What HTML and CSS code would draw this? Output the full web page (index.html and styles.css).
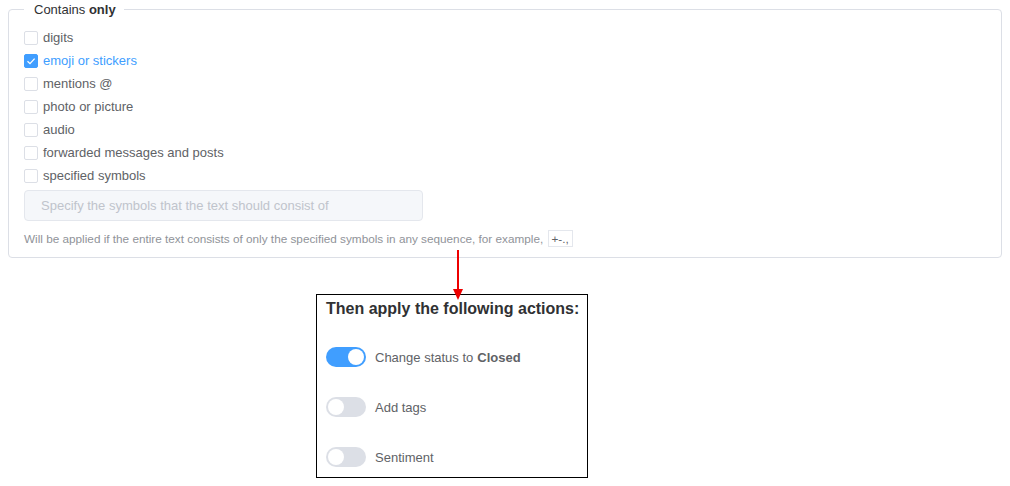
FILE: index.html
```html
<!DOCTYPE html>
<html lang="en">
<head>
  <meta charset="UTF-8" />
  <meta name="viewport" content="width=device-width, initial-scale=1.0"/>
  <title>Contains only</title>
  <link rel="stylesheet" href="styles.css">
</head>
<body>
  <fieldset class="filter">
    <legend>Contains <b>only</b></legend>

    <ul class="checks">
      <li><span class="box"></span>digits</li>
      <li class="checked"><span class="box"><svg viewBox="0 0 14 14" width="14" height="14"><path d="M3.5 7.2 L6 9.6 L10.6 4.6" fill="none" stroke="#fff" stroke-width="1.3"/></svg></span>emoji or stickers</li>
      <li><span class="box"></span>mentions @</li>
      <li><span class="box"></span>photo or picture</li>
      <li><span class="box"></span>audio</li>
      <li><span class="box"></span>forwarded messages and posts</li>
      <li><span class="box"></span>specified symbols</li>
    </ul>

    <div class="symbols">Specify the symbols that the text should consist of</div>
    <p class="hint">Will be applied if the entire text consists of only the specified symbols in any sequence, for example, <code>+-.,</code></p>
  </fieldset>

  <div class="arrow"></div>

  <div class="actions">
    <h3>Then apply the following actions:</h3>
    <div class="action"><span class="switch on"></span>Change status to <b>Closed</b></div>
    <div class="action"><span class="switch"></span>Add tags</div>
    <div class="action"><span class="switch"></span>Sentiment</div>
  </div>
</body>
</html>
```

FILE: styles.css
```css
body {
  margin: 0;
  background: #fff;
  font-family: "Liberation Sans", Arial, sans-serif;
  font-size: 13px;
  color: #606266;
  position: relative;
}
.filter {
  margin: 2px 8px 0;
  padding: 9px 15px 11px;
  border: 1px solid #dcdfe6;
  border-radius: 4px;
  height: 256px;
  box-sizing: border-box;
}
.filter legend {
  margin-left: 0;
  padding: 0 8px 0 10px;
  color: #303133;
  font-size: 13px;
}
.checks {
  list-style: none;
  margin: 0;
  padding: 0;
}
.checks li {
  display: flex;
  align-items: center;
  height: 23px;
}
.box {
  width: 14px;
  height: 14px;
  box-sizing: border-box;
  border: 1px solid #dcdfe6;
  border-radius: 2px;
  margin-right: 5px;
  background: #fff;
}
.box svg {
  display: block;
  margin: -1px;
}
.checks .checked {
  color: #409eff;
}
.checked .box {
  background: #409eff;
  border-color: #409eff;
}
.symbols {
  margin-top: 3px;
  width: 399px;
  height: 31px;
  box-sizing: border-box;
  padding: 0 16px;
  line-height: 29px;
  background: #f5f7fa;
  border: 1px solid #e4e7ed;
  border-radius: 4px;
  color: #c0c4cc;
}
.hint {
  margin: 9px 0 0;
  font-size: 11.75px;
  color: #909399;
}
.hint code {
  display: inline-block;
  font-family: inherit;
  border: 1px solid #e4e7ed;
  padding: 1px 3px;
  margin-left: 1px;
  color: #606266;
}
.arrow {
  position: absolute;
  left: 457px;
  top: 250px;
  width: 2px;
  height: 40px;
  background: #e00;
}
.arrow::after {
  content: "";
  position: absolute;
  left: -4px;
  bottom: -10px;
  border-left: 5px solid transparent;
  border-right: 5px solid transparent;
  border-top: 11px solid #e00;
}
.actions {
  margin: 36px 0 0 316px;
  width: 272px;
  height: 184px;
  box-sizing: border-box;
  border: 1px solid #000;
  padding: 5px 0 5px 9px;
}
.actions h3 {
  margin: 0 0 29px;
  font-size: 16px;
  white-space: nowrap;
  color: #303133;
}
.action {
  display: flex;
  align-items: center;
  height: 20px;
  margin-bottom: 30px;
}
.action b {
  margin-left: 4px;
}
.switch {
  position: relative;
  width: 40px;
  height: 20px;
  border-radius: 10px;
  background: #dcdfe6;
  margin-right: 9px;
}
.switch::after {
  content: "";
  position: absolute;
  top: 2px;
  left: 2px;
  width: 16px;
  height: 16px;
  border-radius: 50%;
  background: #fff;
}
.switch.on {
  background: #409eff;
}
.switch.on::after {
  left: 22px;
}
```
